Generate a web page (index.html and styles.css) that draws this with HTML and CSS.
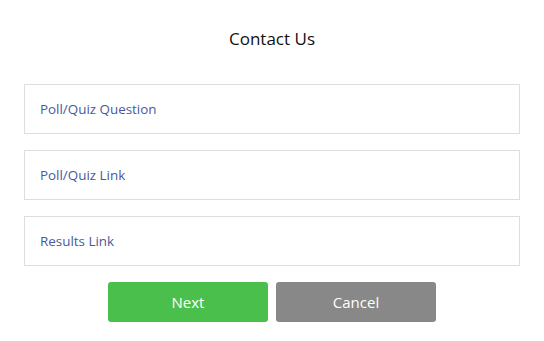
FILE: index.html
```html
<!DOCTYPE html>
<html lang="en">
<head>
<meta charset="UTF-8" />
<meta name="viewport" content="width=device-width, initial-scale=1.0" />
<title>Contact Us</title>
<link rel="stylesheet" href="styles.css">
</head>
<body>
<div class="container">
  <h1>Contact Us</h1>
  <form class="form">
    <input type="text" class="field" placeholder="Poll/Quiz Question">
    <input type="text" class="field" placeholder="Poll/Quiz Link">
    <input type="text" class="field" placeholder="Results Link">
    <div class="actions">
      <button type="button" class="btn next">Next</button>
      <button type="button" class="btn cancel">Cancel</button>
    </div>
  </form>
</div>
</body>
</html>
```
FILE: styles.css
```css
body { margin: 0; padding: 0; background: #fff; font-family: "Open Sans", "Noto Sans", sans-serif; }
.container { padding: 26px 24px 0 24px; }
h1 { margin: 0; font-size: 17px; font-weight: 400; color: #111; text-align: center; line-height: 26px; }
.form { display: flex; flex-direction: column; gap: 16px; margin-top: 32px; }
.field { box-sizing: border-box; width: 100%; height: 50px; padding: 0 15px; border: 1px solid #dedede; border-radius: 0; font-family: inherit; font-size: 13.4px; outline: none; }
.field::placeholder { color: #48599a; opacity: 1; }
.actions { display: flex; justify-content: center; gap: 8px; }
.btn { width: 160px; height: 40px; border: none; border-radius: 3px; color: #fff; font-family: inherit; font-size: 15px; cursor: pointer; }
.btn.next { background: #4bbf4b; }
.btn.cancel { background: #888888; }
```
